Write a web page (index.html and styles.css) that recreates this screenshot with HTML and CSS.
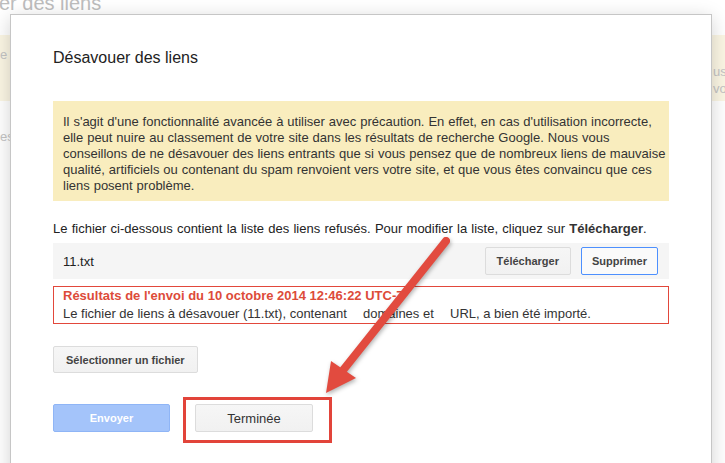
FILE: index.html
```html
<!DOCTYPE html>
<html lang="fr">
<head>
    <meta charset="UTF-8">
    <meta name="viewport" content="width=device-width, initial-scale=1.0">
    <title>Désavouer des liens</title>
    <link rel="stylesheet" href="styles.css">
</head>
<body>
    <!-- page behind the dialog -->
    <div class="page">
        <h1 class="page-title">Désavouer des liens</h1>
        <div class="page-note">
            <p>e fichier contient des liens que Google ne prendra plus en compte pour</p>
            <p>us pouvez le modifier ou le remplacer ici.</p>
            <p>vo</p>
        </div>
        <p class="page-text">es</p>
    </div>

    <div class="dialog">
        <h2 class="dialog-title">Désavouer des liens</h2>

        <div class="warning">
            Il s'agit d'une fonctionnalité avancée à utiliser avec précaution. En effet, en cas d'utilisation incorrecte,<br>
            elle peut nuire au classement de votre site dans les résultats de recherche Google. Nous vous<br>
            conseillons de ne désavouer des liens entrants que si vous pensez que de nombreux liens de mauvaise<br>
            qualité, artificiels ou contenant du spam renvoient vers votre site, et que vous êtes convaincu que ces<br>
            liens posent problème.
        </div>

        <p class="list-intro">Le fichier ci-dessous contient la liste des liens refusés. Pour modifier la liste, cliquez sur <strong>Télécharger</strong>.</p>

        <div class="file-row">
            <span class="file-name">11.txt</span>
            <button class="btn">Télécharger</button>
            <button class="btn btn-focus">Supprimer</button>
        </div>

        <div class="result">
            <div class="result-title">Résultats de l'envoi du 10 octobre 2014 12:46:22 UTC-7</div>
            <div>Le fichier de liens à désavouer (11.txt), contenant <span class="blank"></span> domaines et <span class="blank"></span> URL, a bien été importé.</div>
        </div>

        <button class="btn btn-select">Sélectionner un fichier</button>

        <div class="actions">
            <button class="btn btn-send">Envoyer</button>
            <span class="done-wrap"><button class="btn btn-done">Terminée</button></span>
        </div>
    </div>

    <!-- annotation arrow -->
    <svg class="arrow" width="725" height="463" viewBox="0 0 725 463">
        <line x1="446" y1="241" x2="344" y2="369" stroke="#e24b3f" stroke-width="8" stroke-linecap="round"/>
        <polygon points="326,393 331,361 356,378" fill="#e24b3f"/>
    </svg>
</body>
</html>
```

FILE: styles.css
```css
body {
    margin: 0;
    width: 725px;
    height: 463px;
    overflow: hidden;
    position: relative;
    background-color: #fff;
    font-family: "Liberation Sans", Arial, sans-serif;
    color: #222;
}
.page {
    color: #c4c4c4;
}
.page-title {
    font-size: 20px;
    font-weight: normal;
    line-height: 24px;
    margin: -9px 0 0 -80px;
    color: #bdbdbd;
}
.page-note {
    margin-top: 20px;
    height: 66px;
    padding: 11px 0 0 0;
    box-sizing: border-box;
    background-color: #fbf6e4;
    font-size: 13px;
    line-height: 17px;
    overflow: hidden;
}
.page-note p {
    margin: 0;
    padding-left: 713px;
    white-space: nowrap;
}
.page-note p:first-child {
    padding-left: 0;
}
.page-text {
    margin: 28px 0 0 0;
    font-size: 13px;
}
.dialog {
    position: absolute;
    left: 10px;
    top: 14px;
    width: 702px;
    height: 480px;
    box-sizing: border-box;
    padding: 32px 42px;
    background-color: #fff;
    border: 1px solid #c6c6c6;
    box-shadow: 0 4px 18px rgba(0, 0, 0, 0.18);
    font-size: 13px;
}
.dialog-title {
    font-size: 16px;
    font-weight: normal;
    line-height: 22px;
    margin: 0 0 32px;
    color: #222;
}
.warning {
    background-color: #f9edbe;
    padding: 13px 0 7px 10px;
    line-height: 16px;
    color: #333;
    word-spacing: 0.3px;
}
.list-intro {
    margin: 20px 0 0;
    line-height: 16px;
    word-spacing: 0.6px;
}
.list-intro strong {
    color: #333;
}
.file-row {
    display: flex;
    align-items: center;
    gap: 10px;
    height: 36px;
    margin-top: 6px;
    padding: 0 11px 0 10px;
    background-color: #f5f5f5;
}
.file-name {
    flex: 1;
}
.btn {
    height: 28px;
    padding: 0 11px;
    border: 1px solid #dcdcdc;
    border-radius: 2px;
    background: linear-gradient(#f6f6f6, #f1f1f1);
    font-family: "Liberation Sans", Arial, sans-serif;
    font-size: 11px;
    font-weight: bold;
    color: #444;
}
.btn-focus {
    border-color: #4d90fe;
    background: #fafafa;
    padding: 0 10px;
}
.result {
    margin-top: 7px;
    border: 1px solid #e2473b;
    padding: 0 9px;
    line-height: 18px;
    color: #333;
}
.result-title {
    color: #dd4b39;
    font-weight: bold;
}
.blank {
    display: inline-block;
    width: 9px;
}
.btn-select {
    display: block;
    height: 27px;
    margin-top: 22px;
    padding: 0 12px;
}
.actions {
    display: flex;
    gap: 25px;
    margin-top: 31px;
}
.btn-send {
    width: 117px;
    background: #a4c4fa;
    border-color: #8fb5f6;
    color: #fff;
}
.btn-done {
    width: 118px;
    font-size: 13px;
    font-weight: normal;
    color: #333;
}
.done-wrap {
    position: relative;
}
.done-wrap::after {
    content: '';
    position: absolute;
    left: -12px;
    top: -7px;
    right: -19px;
    bottom: -11px;
    border: 3px solid #e2443a;
}
.arrow {
    position: absolute;
    left: 0;
    top: 0;
    filter: drop-shadow(1px 2px 2px rgba(0, 0, 0, 0.3));
}
```
